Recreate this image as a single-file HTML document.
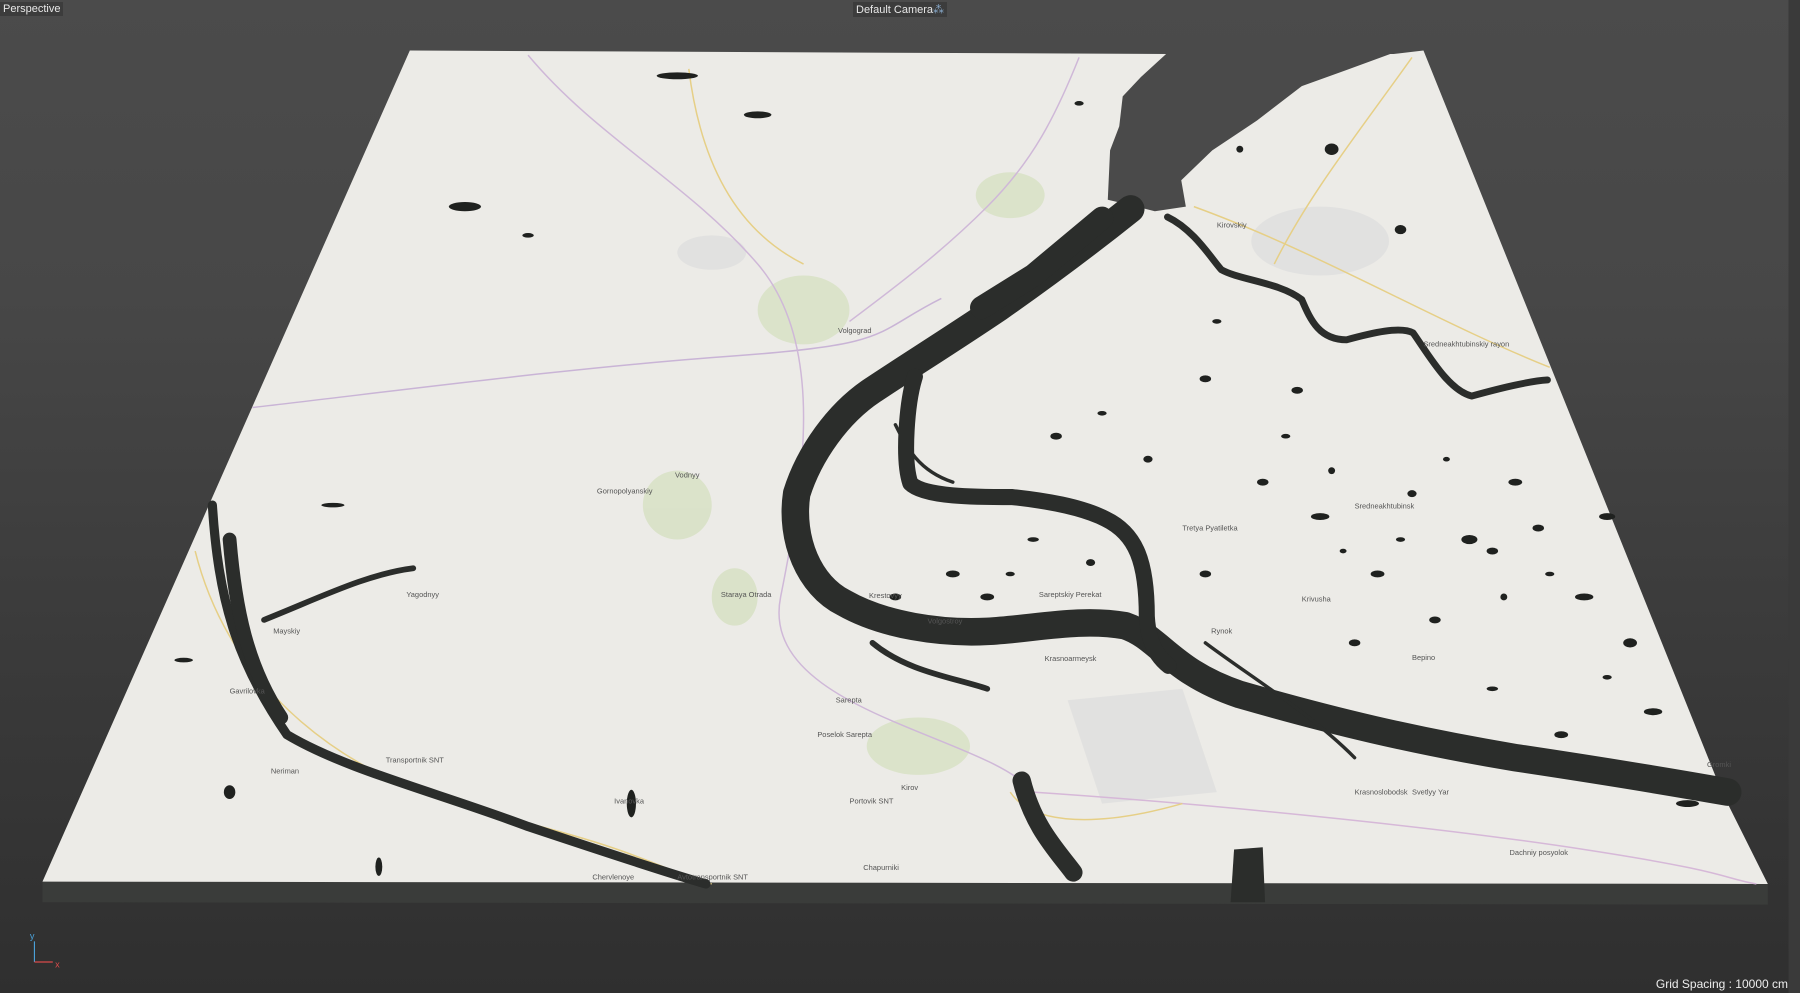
<!DOCTYPE html>
<html><head><meta charset="utf-8"><style>
html,body{margin:0;padding:0}
body{width:1800px;height:993px;overflow:hidden;background:linear-gradient(#4b4b4b,#474747 30%,#3c3c3c 60%,#2f2f2f);font-family:"Liberation Sans",sans-serif;position:relative}
.lbl{position:absolute;color:#e8e8e8;font-size:11px;background:#3c3c3c;padding:1px 3px}
svg{position:absolute;left:0;top:0}
</style></head><body>
<svg width="1800" height="993" viewBox="0 0 1568 865" preserveAspectRatio="none">
<rect x="1558" y="0" width="10" height="865" fill="#3a3a3a"/>
<polygon points="37,768 1540,770 1540,788 37,786" fill="#3a3c3a"/>
<polygon points="357,44 1017,47 1214,47 1240,44 1500,690 1540,770 37,768" fill="#ecebe7"/>
<g fill="#d9e2c6" opacity="0.9">
<ellipse cx="700" cy="270" rx="40" ry="30"/><ellipse cx="880" cy="170" rx="30" ry="20"/>
<ellipse cx="590" cy="440" rx="30" ry="30"/><ellipse cx="800" cy="650" rx="45" ry="25"/><ellipse cx="640" cy="520" rx="20" ry="25"/>
</g>
<g fill="#dedede" opacity="0.8"><polygon points="930,610 1030,600 1060,690 960,700"/><ellipse cx="1150" cy="210" rx="60" ry="30"/><ellipse cx="620" cy="220" rx="30" ry="15"/></g>
<g fill="none" stroke-width="1.3">
<path d="M220,355 C350,340 500,320 640,310 S760,290 820,260" stroke="#c9b4d6"/>
<path d="M460,48 C520,120 600,160 660,230 S700,420 680,520 S860,640 900,690" stroke="#cfb8d8"/>
<path d="M940,50 C920,100 900,140 860,180 S780,250 740,280" stroke="#cfb8d8"/>
<path d="M170,480 C200,600 300,680 430,710 S580,760 620,770" stroke="#e6cf86"/>
<path d="M900,690 C1050,700 1250,720 1380,740 S1500,765 1530,770" stroke="#d6b8d8"/>
<path d="M1040,180 C1150,220 1250,280 1350,320" stroke="#e6cf86"/>
<path d="M1230,50 C1180,120 1140,170 1110,230" stroke="#e6cf86"/>
<path d="M600,60 C610,140 640,200 700,230" stroke="#e6cf86"/>
<path d="M880,690 C900,720 960,720 1030,700" stroke="#e6cf86"/>
</g>
<polygon points="1017,46 994,67 978,84 975,110 967,131 965,174 978,177 1006,184 1033,180 1029,157 1056,131 1095,105 1134,75 1173,61 1214,46" fill="#4a4a4a"/>
<g fill="none" stroke="#2b2d2b" stroke-linecap="round" stroke-linejoin="round">
<path d="M985,182 C950,210 910,240 870,268 C830,295 790,320 760,340 C730,360 705,395 694,430 C688,470 705,510 735,525 C770,545 820,552 860,550 C900,548 940,538 980,545 C1010,555 1020,585 1080,605 C1160,628 1230,645 1320,660 C1400,672 1460,682 1505,690" stroke-width="24"/>
<path d="M960,190 L900,240 L855,268" stroke-width="20"/>
<path d="M1017,189 C1040,200 1055,225 1064,235 C1080,244 1115,246 1134,261 C1142,280 1150,296 1173,296 C1195,290 1220,284 1231,290 C1245,310 1262,340 1282,345 C1300,340 1330,332 1348,331" stroke-width="6"/>
<path d="M797,328 C790,350 786,400 793,421 C805,433 850,433 882,433 C910,436 941,441 963,452 C990,465 999,490 999,537 C1000,555 1005,570 1018,580" stroke-width="14"/>
<path d="M185,440 C190,520 205,575 250,640 C300,670 380,690 460,720 C520,740 580,760 615,770" stroke-width="8"/>
<path d="M200,470 C205,530 215,580 245,625" stroke-width="12"/>
<path d="M230,540 C280,520 320,500 360,495" stroke-width="5"/>
<path d="M890,680 C900,720 920,740 935,760" stroke-width="16"/>
<path d="M760,560 C790,585 830,590 860,600" stroke-width="5"/>
<path d="M1050,560 C1090,590 1140,620 1180,660" stroke-width="3"/>
<path d="M780,370 C790,390 800,410 830,420" stroke-width="3"/>
<path d="M185,440 L300,440" stroke-width="3" opacity="0"/>
</g>
<polygon points="1075,740 1100,738 1102,786 1072,786" fill="#2b2d2b"/>
<g fill="#1f211f">
<ellipse cx="405" cy="180" rx="14" ry="4"/><ellipse cx="590" cy="66" rx="18" ry="3"/><ellipse cx="660" cy="100" rx="12" ry="3"/>
<ellipse cx="1160" cy="130" rx="6" ry="5"/><ellipse cx="1220" cy="200" rx="5" ry="4"/><ellipse cx="1280" cy="470" rx="7" ry="4"/>
<ellipse cx="1100" cy="420" rx="5" ry="3"/><ellipse cx="1150" cy="450" rx="8" ry="3"/><ellipse cx="1200" cy="500" rx="6" ry="3"/>
<ellipse cx="1250" cy="540" rx="5" ry="3"/><ellipse cx="1320" cy="420" rx="6" ry="3"/><ellipse cx="1380" cy="520" rx="8" ry="3"/>
<ellipse cx="1420" cy="560" rx="6" ry="4"/><ellipse cx="1050" cy="500" rx="5" ry="3"/><ellipse cx="1000" cy="400" rx="4" ry="3"/>
<ellipse cx="830" cy="500" rx="6" ry="3"/><ellipse cx="780" cy="520" rx="5" ry="3"/><ellipse cx="1440" cy="620" rx="8" ry="3"/>
<ellipse cx="1470" cy="700" rx="10" ry="3"/><ellipse cx="1360" cy="640" rx="6" ry="3"/><ellipse cx="1130" cy="340" rx="5" ry="3"/>
<ellipse cx="1050" cy="330" rx="5" ry="3"/><ellipse cx="200" cy="690" rx="5" ry="6"/><ellipse cx="550" cy="700" rx="4" ry="12"/>
<ellipse cx="1340" cy="460" rx="5" ry="3"/><ellipse cx="1400" cy="450" rx="7" ry="3"/><ellipse cx="1180" cy="560" rx="5" ry="3"/>
<ellipse cx="1120" cy="380" rx="4" ry="2"/><ellipse cx="1160" cy="410" rx="3" ry="3"/><ellipse cx="1230" cy="430" rx="4" ry="3"/>
<ellipse cx="1260" cy="400" rx="3" ry="2"/><ellipse cx="1300" cy="480" rx="5" ry="3"/><ellipse cx="1350" cy="500" rx="4" ry="2"/>
<ellipse cx="1310" cy="520" rx="3" ry="3"/><ellipse cx="1220" cy="470" rx="4" ry="2"/><ellipse cx="1170" cy="480" rx="3" ry="2"/>
<ellipse cx="880" cy="500" rx="4" ry="2"/><ellipse cx="900" cy="470" rx="5" ry="2"/><ellipse cx="860" cy="520" rx="6" ry="3"/>
<ellipse cx="950" cy="490" rx="4" ry="3"/><ellipse cx="920" cy="380" rx="5" ry="3"/><ellipse cx="960" cy="360" rx="4" ry="2"/>
<ellipse cx="1060" cy="280" rx="4" ry="2"/><ellipse cx="1300" cy="600" rx="5" ry="2"/><ellipse cx="1400" cy="590" rx="4" ry="2"/>
<ellipse cx="1080" cy="130" rx="3" ry="3"/><ellipse cx="940" cy="90" rx="4" ry="2"/><ellipse cx="460" cy="205" rx="5" ry="2"/>
<ellipse cx="290" cy="440" rx="10" ry="2"/><ellipse cx="160" cy="575" rx="8" ry="2"/><ellipse cx="330" cy="755" rx="3" ry="8"/>
</g>
<g font-family="Liberation Sans,sans-serif" font-size="6.5" fill="#555">
<text x="730" y="290">Volgograd</text><text x="910" y="576">Krasnoarmeysk</text><text x="728" y="612">Sarepta</text>
<text x="712" y="642">Poselok Sarepta</text><text x="1180" y="692">Krasnoslobodsk</text><text x="1230" y="692">Svetlyy Yar</text>
<text x="1315" y="745">Dachniy posyolok</text><text x="1487" y="668">Gromki</text><text x="1230" y="575">Bepino</text>
<text x="1134" y="524">Krivusha</text><text x="1055" y="552">Rynok</text><text x="740" y="700">Portovik SNT</text>
<text x="752" y="758">Chapurniki</text><text x="535" y="700">Ivanovka</text><text x="516" y="766">Chervlenoye</text>
<text x="590" y="766">Avtotransportnik SNT</text><text x="236" y="674">Neriman</text><text x="336" y="664">Transportnik SNT</text>
<text x="238" y="552">Mayskiy</text><text x="200" y="604">Gavrilovka</text><text x="354" y="520">Yagodnyy</text>
<text x="588" y="416">Vodnyy</text><text x="628" y="520">Staraya Otrada</text><text x="757" y="521">Krestovyy</text>
<text x="808" y="543">Volgostroy</text><text x="1030" y="462">Tretya Pyatiletka</text><text x="1240" y="302">Sredneakhtubinskiy rayon</text>
<text x="785" y="688">Kirov</text><text x="520" y="430">Gornopolyanskiy</text><text x="1180" y="443">Sredneakhtubinsk</text>
<text x="905" y="520">Sareptskiy Perekat</text><text x="1060" y="198">Kirovskiy</text>
</g>
<g stroke-width="1"><line x1="30" y1="820" x2="30" y2="838" stroke="#4aa0d8"/><line x1="30" y1="838" x2="46" y2="838" stroke="#d84a4a"/></g>
<text x="48" y="843" font-size="8" fill="#d84a4a" font-family="Liberation Sans,sans-serif">x</text>
<text x="26" y="818" font-size="8" fill="#4aa0d8" font-family="Liberation Sans,sans-serif">y</text>
</svg>
<div class="lbl" style="left:0;top:2px">Perspective</div>
<div class="lbl" style="left:853px;top:2px">Default Camera<span style="color:#8ac">⁂</span></div>
<div style="position:absolute;right:12px;bottom:2px;color:#eee;font-size:12px">Grid Spacing : 10000 cm</div>
</body></html>
